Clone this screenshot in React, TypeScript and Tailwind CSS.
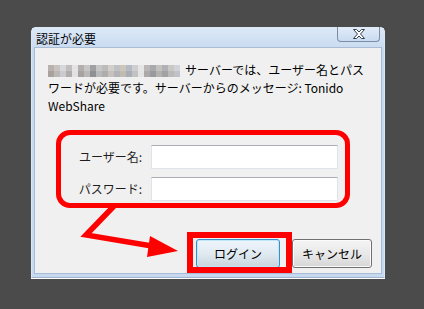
const blurTop = [
  "#b9b1ae", "#c8c3c1", "#d6d8dc", "#c2bebd", "#e4e4e4", "#b3afae", "#c9c6c5", "#9fa0a3", "#c6c7c9", "#bdbcbb",
  "#d2cfcd", "#c0c1c4", "#ccc6bc", "#b7bcc4", "#cfcfcf", "#e6e6e6", "#bbb7b6", "#a7a9ad", "#c3c1c0", "#b1b0b2",
  "#c9c8c7", "#d0d3d8",
];
const blurBottom = [
  "#a9a19e", "#bdb8b6", "#c9cbd0", "#b1adac", "#e2e2e2", "#a6a2a1", "#bbb8b7", "#8f9093", "#b8b9bb", "#aeadac",
  "#c4c1bf", "#b2b3b6", "#c1bbb1", "#a9aeb6", "#c2c2c2", "#e4e4e4", "#ada9a8", "#989a9e", "#b4b2b1", "#a2a1a3",
  "#bbbab9", "#bfc3c9",
];

function Blur() {
  return (
    <span className="inline-flex flex-col align-middle mr-[5px] -mt-[2px]">
      <span className="flex">
        {blurTop.map((c, i) => (
          <span key={i} className="w-[6px] h-[6px]" style={{ background: c }} />
        ))}
      </span>
      <span className="flex">
        {blurBottom.map((c, i) => (
          <span key={i} className="w-[6px] h-[6px]" style={{ background: c }} />
        ))}
      </span>
    </span>
  );
}

function Field({ label }: { label: string }) {
  return (
    <div className="flex items-center justify-end gap-[9px]">
      <span className="text-[12px] text-[#1e1e1e]">{label}</span>
      <div className="w-[187px] h-[24px] bg-white border border-[#dfe3ea] border-t-[#abadb3]" />
    </div>
  );
}

export default function App() {
  return (
    <div className="relative w-[424px] h-[309px] bg-[#4b4b4b] pl-[31px] pt-[27px] font-['Noto_Sans_CJK_JP','Noto_Sans',sans-serif] text-black overflow-hidden">
      {/* window */}
      <div className="w-[354px] h-[251px] bg-[#c6d9f0] rounded-t-[5px] border border-[#dce7f4] border-b-[#9fb3cc] px-[2px] pb-[3px] shadow-[0_1px_0_#ffffff]">
        <div className="h-[19px] flex items-start justify-between bg-gradient-to-b from-[#dbe8f7] to-[#cbdcf1] -mx-[2px] px-[4px]">
          <span className="text-[12px] leading-[19px] pt-[1px]">認証が必要</span>
          <div className="w-[43px] h-[15px] -mt-[1px] rounded-b-[4px] border border-t-0 border-[#7d8ea4] bg-gradient-to-b from-[#e2ecf8] to-[#c9dbf1] flex items-center justify-center">
            <svg width="12" height="10" viewBox="0 0 12 10">
              <path
                d="M0.5 0.5 H3.5 L6 3 L8.5 0.5 H11.5 L7.5 5 L11.5 9.5 H8.5 L6 7 L3.5 9.5 H0.5 L4.5 5 Z"
                fill="#ffffff"
                stroke="#35404d"
                strokeWidth="1"
                strokeLinejoin="miter"
              />
            </svg>
          </div>
        </div>

        {/* client area */}
        <div className="h-[227px] bg-[#f0f0f0] border border-[#a9bcd5] flex flex-col">
          <div className="pl-[13px] pt-[13px] text-[12px] leading-[18px]">
            <div className="h-[18px] whitespace-nowrap">
              <Blur />
              サーバーでは、ユーザー名とパス
            </div>
            <div className="h-[18px] whitespace-nowrap">ワードが必要です。サーバーからのメッセージ: Tonido</div>
            <div className="h-[18px] whitespace-nowrap">WebShare</div>
          </div>

          <div className="ml-[21px] mt-[15px] w-[294px] h-[78px] border-[5px] border-[#ff0000] rounded-[14px] pt-[10px] pr-[7px] flex flex-col gap-[8px]">
            <Field label="ユーザー名:" />
            <Field label="パスワード:" />
          </div>

          <div className="mt-[31px] pr-[9px] flex justify-end gap-[12px]">
            <div className="relative">
              <button className="w-[84px] h-[29px] rounded-[3px] border border-[#3c8fc6] bg-gradient-to-b from-[#eef6fb] via-[#e0eaf1] to-[#c9d5de] shadow-[inset_0_0_0_1px_#bfe6fb] text-[12px]">
                ログイン
              </button>
              <div className="absolute -left-[9px] -top-[7px] -right-[12px] -bottom-[5px] border-[6px] border-[#ff0000] pointer-events-none" />
            </div>
            <button className="w-[80px] h-[29px] rounded-[3px] border border-[#707070] bg-gradient-to-b from-[#f4f4f4] via-[#e9e9e9] to-[#d6d6d6] shadow-[inset_0_0_0_1px_#fbfbfb] text-[12px]">
              キャンセル
            </button>
          </div>
        </div>
      </div>

      {/* annotation arrow */}
      <svg className="absolute left-0 top-0 pointer-events-none" width="424" height="309" viewBox="0 0 424 309">
        <polyline
          points="114,206 86,235 152,246"
          fill="none"
          stroke="#ff0000"
          strokeWidth="5.5"
          strokeLinejoin="miter"
        />
        <polygon points="150,236 147,257 178,251" fill="#ff0000" />
      </svg>
    </div>
  );
}
